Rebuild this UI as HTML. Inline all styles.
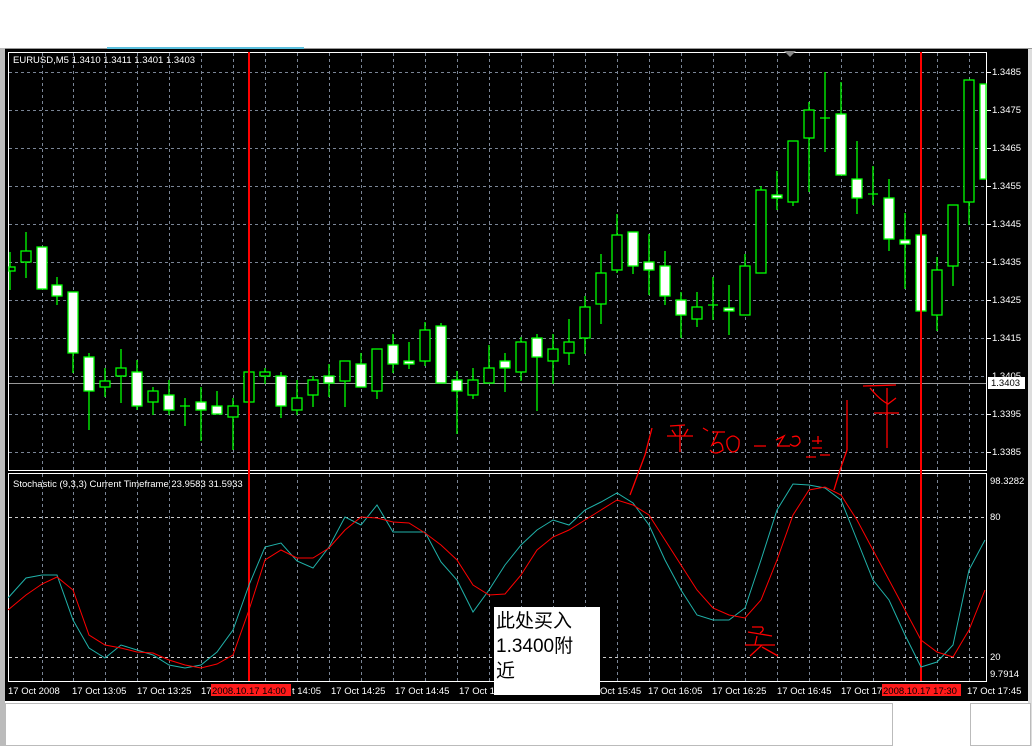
<!DOCTYPE html>
<html><head><meta charset="utf-8"><style>
html,body{margin:0;padding:0;background:#fff;}
svg{display:block;}
text{font-family:"Liberation Sans","Noto Sans CJK SC",sans-serif;}
</style></head><body>
<svg width="1032" height="746" viewBox="0 0 1032 746" xmlns="http://www.w3.org/2000/svg">
<rect x="0" y="0" width="1032" height="746" fill="#fff"/>
<rect x="0" y="48" width="1032" height="2" fill="#999"/>
<rect x="107" y="47" width="197" height="2" fill="#5bc0de"/>
<rect x="0" y="48" width="5" height="698" fill="#bbb"/>
<rect x="5" y="49" width="1023" height="652" fill="#000"/>
<rect x="1028" y="49" width="4" height="697" fill="#ddd"/>
<rect x="8.5" y="52.5" width="978" height="418" fill="none" stroke="#fff"/>
<rect x="8.5" y="473.5" width="978" height="208" fill="none" stroke="#fff"/>
<polygon points="784,51 796,51 790,57" fill="#888"/>
<g stroke="#7a8596" stroke-dasharray="3,3" stroke-width="1">
<path d="M9 72.5H986M9 110.5H986M9 148.5H986M9 186.5H986M9 224.5H986M9 262.5H986M9 300.5H986M9 338.5H986M9 376.5H986M9 414.5H986M9 452.5H986"/>
<path d="M42.5 53V470M73.5 53V470M105.5 53V470M137.5 53V470M169.5 53V470M201.5 53V470M233.5 53V470M265.5 53V470M297.5 53V470M329.5 53V470M361.5 53V470M393.5 53V470M425.5 53V470M457.5 53V470M489.5 53V470M521.5 53V470M553.5 53V470M585.5 53V470M617.5 53V470M649.5 53V470M681.5 53V470M713.5 53V470M745.5 53V470M777.5 53V470M809.5 53V470M841.5 53V470M873.5 53V470M905.5 53V470M937.5 53V470M969.5 53V470"/>
<path d="M42.5 474V681M73.5 474V681M105.5 474V681M137.5 474V681M169.5 474V681M201.5 474V681M233.5 474V681M265.5 474V681M297.5 474V681M329.5 474V681M361.5 474V681M393.5 474V681M425.5 474V681M457.5 474V681M489.5 474V681M521.5 474V681M553.5 474V681M585.5 474V681M617.5 474V681M649.5 474V681M681.5 474V681M713.5 474V681M745.5 474V681M777.5 474V681M809.5 474V681M841.5 474V681M873.5 474V681M905.5 474V681M937.5 474V681M969.5 474V681"/>
</g>
<path d="M9 517.5H986M9 657.5H986" stroke="#ccc" stroke-dasharray="3,3"/>
<path d="M9 383.5H986" stroke="#999"/>
<g stroke="#00ff00" stroke-width="1.3">
<path d="M10 252V290M26 232V278M57 277V305M73 292V373M89 353V430M105 368V397M121 349V403M137 360V410M153 387V415M169 380V415M185 398V426M201 387V441M217 391V414M233 398V450M249 372V402M265 368V384M281 372V418M297 380V415M313 376V407M329 364V397M345 361V407M361 353V387M377 349V399M393 334V373M409 342V369M425 322V366M441 323V383M457 371V434M473 368V399M489 345V383M505 353V392M521 337V381M537 334V411M553 334V384M569 319V365M585 296V354M601 254V324M617 214V273M633 232V274M649 234V295M665 251V305M681 292V338M697 292V327M713 277V320M729 285V335M745 254V315M761 186V273M777 171V210M793 141V206M809 102V192M825 72V152M841 82V175M857 141V214M873 166V205M889 179V251M905 213V289M921 235V311M937 257V331M953 205V286M969 80V225"/>
<path d="M180 406H190M820 118H830M868 194H878M708 305H718"/>
</g>
<g stroke="#00ff00" stroke-width="1.3" fill="#000">
<rect x="9" y="267" width="6" height="4"/>
<rect x="21" y="251" width="10" height="11"/>
<rect x="100" y="381" width="10" height="6"/>
<rect x="116" y="368" width="10" height="8"/>
<rect x="148" y="391" width="10" height="11"/>
<rect x="228" y="406" width="10" height="11"/>
<rect x="244" y="372" width="10" height="30"/>
<rect x="260" y="372" width="10" height="4"/>
<rect x="292" y="398" width="10" height="12"/>
<rect x="308" y="380" width="10" height="15"/>
<rect x="340" y="361" width="10" height="20"/>
<rect x="372" y="349" width="10" height="42"/>
<rect x="420" y="330" width="10" height="31"/>
<rect x="468" y="380" width="10" height="15"/>
<rect x="484" y="368" width="10" height="15"/>
<rect x="516" y="342" width="10" height="30"/>
<rect x="548" y="349" width="10" height="12"/>
<rect x="564" y="342" width="10" height="11"/>
<rect x="580" y="307" width="10" height="31"/>
<rect x="596" y="273" width="10" height="31"/>
<rect x="612" y="235" width="10" height="35"/>
<rect x="692" y="307" width="10" height="12"/>
<rect x="740" y="266" width="10" height="49"/>
<rect x="756" y="190" width="10" height="83"/>
<rect x="788" y="141" width="10" height="61"/>
<rect x="804" y="110" width="10" height="28"/>
<rect x="932" y="270" width="10" height="45"/>
<rect x="948" y="205" width="10" height="61"/>
<rect x="964" y="80" width="10" height="122"/>
</g>
<g stroke="#00ff00" stroke-width="1.3" fill="#fff">
<rect x="37" y="247" width="10" height="42"/>
<rect x="52" y="285" width="10" height="11"/>
<rect x="68" y="292" width="10" height="61"/>
<rect x="84" y="357" width="10" height="34"/>
<rect x="132" y="372" width="10" height="34"/>
<rect x="164" y="395" width="10" height="15"/>
<rect x="196" y="402" width="10" height="8"/>
<rect x="212" y="406" width="10" height="8"/>
<rect x="276" y="376" width="10" height="30"/>
<rect x="324" y="376" width="10" height="7"/>
<rect x="356" y="364" width="10" height="23"/>
<rect x="388" y="345" width="10" height="19"/>
<rect x="404" y="361" width="10" height="3"/>
<rect x="436" y="326" width="10" height="57"/>
<rect x="452" y="380" width="10" height="11"/>
<rect x="500" y="361" width="10" height="7"/>
<rect x="532" y="338" width="10" height="19"/>
<rect x="628" y="232" width="10" height="34"/>
<rect x="644" y="262" width="10" height="8"/>
<rect x="660" y="266" width="10" height="30"/>
<rect x="676" y="300" width="10" height="15"/>
<rect x="724" y="308" width="10" height="3"/>
<rect x="772" y="195" width="10" height="3"/>
<rect x="836" y="114" width="10" height="61"/>
<rect x="852" y="179" width="10" height="19"/>
<rect x="884" y="198" width="10" height="41"/>
<rect x="900" y="240" width="10" height="4"/>
<rect x="916" y="235" width="10" height="76"/>
<rect x="980" y="84" width="6" height="95"/>
</g>
<path d="M249 52V681M921 52V681" stroke="#ff0000" stroke-width="2"/>
<polyline fill="none" stroke="#20b2aa" stroke-width="1" points="8,598 26,578 42,575 57,575 73,620 89,648 105,658 121,645 137,650 153,655 169,665 185,668 201,665 217,652 233,630 249,585 265,547 281,543 297,561 313,568 329,547 345,517 361,525 377,505 393,532 409,532 425,532 441,562 457,580 473,612 489,590 505,565 521,545 537,530 553,520 569,525 585,510 601,502 617,493 633,503 649,525 665,560 681,590 697,615 713,620 729,620 745,608 761,560 777,510 793,484 809,485 825,488 841,500 857,540 873,580 889,600 905,635 921,667 937,662 953,645 969,570 985,540"/>
<polyline fill="none" stroke="#ff0000" stroke-width="1" points="8,610 26,595 42,584 57,577 73,590 89,635 105,645 121,648 137,652 153,653 169,660 185,665 201,668 217,664 233,655 249,610 265,560 281,550 297,558 313,558 329,548 345,530 361,517 377,518 393,522 409,523 425,533 441,545 457,560 473,585 489,595 505,594 521,575 537,550 553,537 569,530 585,520 601,510 617,500 633,505 649,515 665,540 681,565 697,590 713,608 729,615 745,618 761,600 777,560 793,515 809,490 825,487 841,495 857,520 873,550 889,580 905,610 921,640 937,652 953,657 969,630 985,590"/>
<text x="13" y="63" fill="#fff" font-size="9.5">EURUSD,M5  1.3410 1.3411 1.3401 1.3403</text>
<text x="13" y="487" fill="#fff" font-size="9.5">Stochastic (9,3,3) Current Timeframe 23.9583 31.5933</text>
<g fill="#fff" font-size="9.5">
<text x="992" y="75">1.3485</text><text x="992" y="113">1.3475</text><text x="992" y="151">1.3465</text><text x="992" y="189">1.3455</text><text x="992" y="227">1.3445</text><text x="992" y="265">1.3435</text><text x="992" y="303">1.3425</text><text x="992" y="341">1.3415</text><text x="992" y="379">1.3405</text><text x="992" y="417">1.3395</text><text x="992" y="455">1.3385</text>
<text x="990" y="484">98.3282</text><text x="990" y="520">80</text><text x="990" y="660">20</text><text x="990" y="677">9.7914</text>
</g>
<g stroke="#fff"><path d="M987 72.5H991M987 110.5H991M987 148.5H991M987 186.5H991M987 224.5H991M987 262.5H991M987 300.5H991M987 338.5H991M987 414.5H991M987 452.5H991"/></g>
<rect x="988" y="377" width="37" height="12" fill="#fff"/>
<text x="991" y="386" fill="#000" font-size="9.5">1.3403</text>
<g fill="#fff" font-size="9.5">
<text x="8" y="694">17 Oct 2008</text>
<text x="72" y="694">17 Oct 13:05</text>
<text x="137" y="694">17 Oct 13:25</text>
<text x="201" y="694">17</text>
<text x="292" y="694">t 14:05</text>
<text x="331" y="694">17 Oct 14:25</text>
<text x="395" y="694">17 Oct 14:45</text>
<text x="459" y="694">17 Oct 15</text>
<text x="600" y="694">Oct 15:45</text>
<text x="648" y="694">17 Oct 16:05</text>
<text x="712" y="694">17 Oct 16:25</text>
<text x="777" y="694">17 Oct 16:45</text>
<text x="841" y="694">17 Oct 17</text>
<text x="967" y="694">17 Oct 17:45</text>
</g>
<rect x="211" y="684" width="80" height="12" fill="#ff1a1a"/>
<text x="212" y="694" fill="#000" font-size="9.5">2008.10.17 14:00</text>
<rect x="882" y="684" width="79" height="12" fill="#ff1a1a"/>
<text x="883" y="694" fill="#000" font-size="9.5">2008.10.17 17:30</text>
<rect x="5" y="701" width="1023" height="45" fill="#fff"/>
<rect x="5.5" y="703.5" width="887" height="42" fill="#fff" stroke="#bbb"/>
<rect x="970.5" y="703.5" width="60" height="42" fill="#fff" stroke="#bbb"/>
<rect x="494" y="607" width="106" height="88" fill="#fff"/>
<text x="496" y="627" fill="#000" font-size="19" font-family="'Noto Serif CJK SC',serif">此处买入</text>
<text x="496" y="652" fill="#000" font-size="19" font-family="'Liberation Mono','Noto Serif CJK SC',serif">1.3400附</text>
<text x="496" y="677" fill="#000" font-size="19" font-family="'Noto Serif CJK SC',serif">近</text>
<g fill="none" stroke="#ff0000" stroke-width="1.3">
<path d="M630 495L645 455L652 428"/>
<path d="M670 426L685 425M667 436H693M680 426V452M672 430L676 436M688 429L684 436"/>
<path d="M703 428L708 431M712 432H725M718 432L712 445Q722 438 723 450Q715 456 710 450M727 440Q733 432 739 440Q740 452 732 452Q726 448 727 440"/>
<path d="M754 446H766M776 440L784 436L778 446H790M792 437Q800 434 800 442Q796 449 790 444M812 441H822M818 436V444M812 448H822M806 457H816M820 455L830 455"/>
<path d="M847 400V450L840 470L834 490"/>
<path d="M863 386L896 385M870 388Q880 400 888 404L896 398M874 413H899M887 388V448"/>
<path d="M752 627H762Q765 630 760 633M748 632L772 636M757 636L755 645M745 645H775M762 645L750 656M762 647L778 656"/>
</g>
</svg>
</body></html>
